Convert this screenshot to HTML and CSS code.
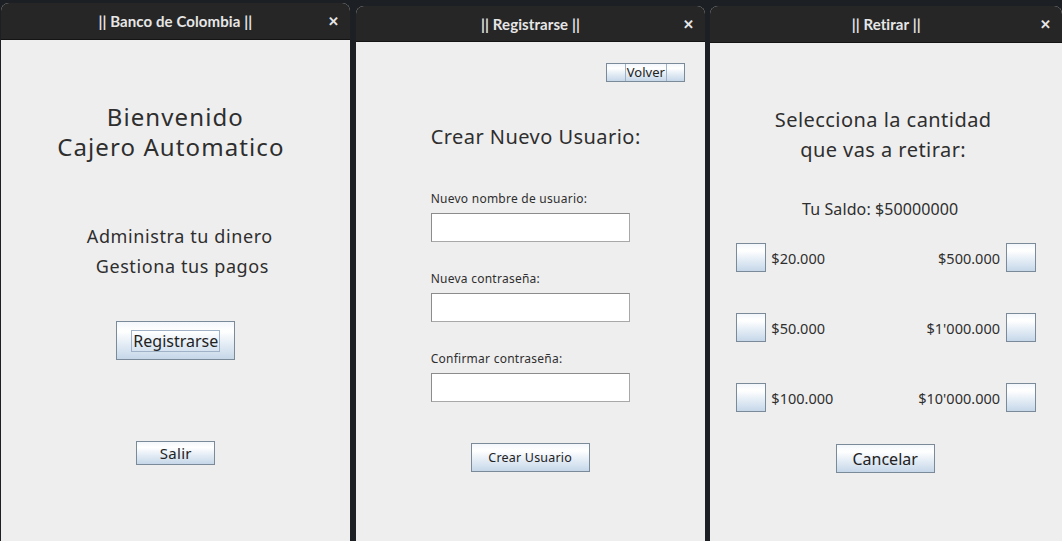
FILE: index.html
```html
<!DOCTYPE html>
<html lang="es">
<head>
<meta charset="utf-8">
<title>Cajero</title>
<link rel="stylesheet" href="styles.css">
</head>
<body>
<div class="desk">
  <section class="win win-a">
    <header class="bar"><span class="bar-title">|| Banco de Colombia ||</span><span class="close">✕</span></header>
    <div class="body body-a">
      <h1 class="big"><span class="line">Bienvenido</span><span class="line line-2">Cajero Automatico</span></h1>
      <p class="sub"><span class="line line-s1">Administra tu dinero</span><span class="line line-s2">Gestiona tus pagos</span></p>
      <button class="btn btn-reg"><span class="focus">Registrarse</span></button>
      <button class="btn btn-salir">Salir</button>
    </div>
  </section>
  <section class="win win-b">
    <header class="bar"><span class="bar-title">|| Registrarse ||</span><span class="close">✕</span></header>
    <div class="body body-b">
      <div class="top-row"><button class="btn btn-volver"><span class="focus-v">Volver</span></button></div>
      <h2 class="form-title">Crear Nuevo Usuario:</h2>
      <label class="lbl">Nuevo nombre de usuario:</label>
      <div class="field"></div>
      <label class="lbl">Nueva contraseña:</label>
      <div class="field"></div>
      <label class="lbl">Confirmar contraseña:</label>
      <div class="field"></div>
      <button class="btn btn-crear">Crear Usuario</button>
    </div>
  </section>
  <section class="win win-c">
    <header class="bar"><span class="bar-title">|| Retirar ||</span><span class="close">✕</span></header>
    <div class="body body-c">
      <h2 class="ret-title">Selecciona la cantidad<br>que vas a retirar:</h2>
      <p class="saldo">Tu Saldo: $50000000</p>
      <div class="opts">
        <div class="opt-row">
          <div class="opt"><span class="tog"></span><span>$20.000</span></div>
          <div class="opt"><span>$500.000</span><span class="tog"></span></div>
        </div>
        <div class="opt-row">
          <div class="opt"><span class="tog"></span><span>$50.000</span></div>
          <div class="opt"><span>$1'000.000</span><span class="tog"></span></div>
        </div>
        <div class="opt-row">
          <div class="opt"><span class="tog"></span><span>$100.000</span></div>
          <div class="opt"><span>$10'000.000</span><span class="tog"></span></div>
        </div>
      </div>
      <button class="btn btn-cancel">Cancelar</button>
    </div>
  </section>
</div>
</body>
</html>
```

FILE: styles.css
```css
* { box-sizing: border-box; }
html, body { margin: 0; padding: 0; }
body {
  width: 1062px;
  height: 541px;
  overflow: hidden;
  background: #1c2024;
  font-family: "Noto Sans", "Open Sans", sans-serif;
  color: #333;
}
.desk {
  display: flex;
  align-items: flex-start;
  height: 541px;
}
.win {
  display: flex;
  flex-direction: column;
  background: #eeeeee;
  border-radius: 8px 8px 0 0;
  overflow: hidden;
  height: 560px;
}
.win-a { width: 349px; margin-left: 1px; margin-top: 3px; }
.win-b { width: 350px; margin-left: 6px; margin-top: 6px; }
.win-c { width: 352px; margin-left: 5px; margin-top: 6px; }
.bar {
  position: relative;
  flex: 0 0 auto;
  height: 37px;
  background: #262626;
  border-bottom: 1px solid #141414;
  display: flex;
  align-items: center;
  justify-content: center;
}
.win-b .bar { height: 36px; }
.bar-title {
  color: #e6e6e6;
  font-family: "Lato", "Noto Sans", sans-serif;
  font-weight: bold;
  font-size: 15px;
  letter-spacing: 0.1px;
}
.close {
  position: absolute;
  right: 11px;
  top: 50%;
  transform: translateY(-50%);
  color: #e6e6e6;
  font-size: 13px;
  font-weight: bold;
}
.body { flex: 1; display: flex; flex-direction: column; }

.btn {
  font-family: "Noto Sans", "Open Sans", sans-serif;
  color: #222;
  border: 1px solid #7a8a99;
  background: linear-gradient(#f3f7fb 0%, #ffffff 25%, #e3ecf5 60%, #c6d7e9 100%);
  padding: 0;
  display: flex;
  align-items: center;
  justify-content: center;
}

/* window A */
.body-a { align-items: center; }
.line { display: block; }
.big {
  margin: 62px 0 0;
  font-size: 24px;
  line-height: 30px;
  font-weight: normal;
  letter-spacing: 1.1px;
  text-align: center;
  color: #2e2e2e;
}
.line-2 { padding-right: 9px; }
.sub {
  margin: 59px 0 0;
  font-size: 18px;
  line-height: 30px;
  letter-spacing: 0.6px;
  text-align: center;
  color: #2e2e2e;
}
.line-s1 { padding-left: 9px; }
.line-s2 { padding-left: 14px; }
.btn-reg {
  margin-top: 40px;
  margin-left: 1px;
  width: 119px;
  height: 39px;
  font-size: 16px;
}
.focus {
  border: 1px solid #9fb2c8;
  padding: 0 1px;
  line-height: 20px;
}
.btn-salir {
  margin-top: 81px;
  margin-left: 1px;
  width: 79px;
  height: 24px;
  font-size: 15px;
  letter-spacing: 0.3px;
}

/* window B */
.body-b { padding-left: 75px; }
.top-row { display: flex; justify-content: flex-end; padding: 21px 20px 0 0; }
.btn-volver { width: 79px; height: 19px; font-size: 13px; }
.focus-v {
  border-left: 1px solid #9fb2c8;
  border-right: 1px solid #9fb2c8;
  height: 17px;
  line-height: 17px;
  padding: 0 1px;
}
.form-title {
  margin: 40px 0 0;
  font-size: 20px;
  line-height: 30px;
  font-weight: normal;
  letter-spacing: 0.45px;
  color: #2e2e2e;
}
.lbl {
  display: block;
  font-size: 12px;
  line-height: 16px;
  letter-spacing: 0.25px;
  color: #2e2e2e;
  margin-top: 29px;
}
.form-title + .lbl { margin-top: 39px; }
.field {
  width: 199px;
  height: 29px;
  margin-top: 6px;
  background: #fff;
  border: 1px solid #a8a8a8;
  border-top-color: #8c8c8c;
  border-left-color: #8c8c8c;
}
.btn-crear {
  margin: 41px 0 0 40px;
  width: 119px;
  height: 29px;
  font-size: 12.5px;
  letter-spacing: 0.2px;
}

/* window C */
.body-c { align-items: center; }
.ret-title {
  margin: 62px 0 0;
  padding-right: 6px;
  font-size: 20px;
  line-height: 30px;
  font-weight: normal;
  letter-spacing: 0.45px;
  text-align: center;
  color: #2e2e2e;
}
.saldo {
  margin: 32px 0 0;
  padding-right: 12px;
  font-size: 16px;
  line-height: 24px;
  letter-spacing: 0.1px;
  color: #2e2e2e;
}
.opts {
  align-self: stretch;
  padding: 0 26px 0 26px;
  margin-top: 22px;
  display: flex;
  flex-direction: column;
  gap: 41px;
}
.opt-row { display: flex; justify-content: space-between; }
.opt { display: flex; align-items: center; gap: 5px; font-size: 14.5px; color: #2e2e2e; }
.opt:last-child { gap: 6px; }
.tog {
  width: 30px;
  height: 29px;
  border: 1px solid #7a8a99;
  background: linear-gradient(#f3f7fb 0%, #ffffff 25%, #e3ecf5 60%, #c6d7e9 100%);
}
.btn-cancel {
  margin-top: 32px;
  margin-right: 2px;
  width: 99px;
  height: 29px;
  font-size: 16px;
}
```
